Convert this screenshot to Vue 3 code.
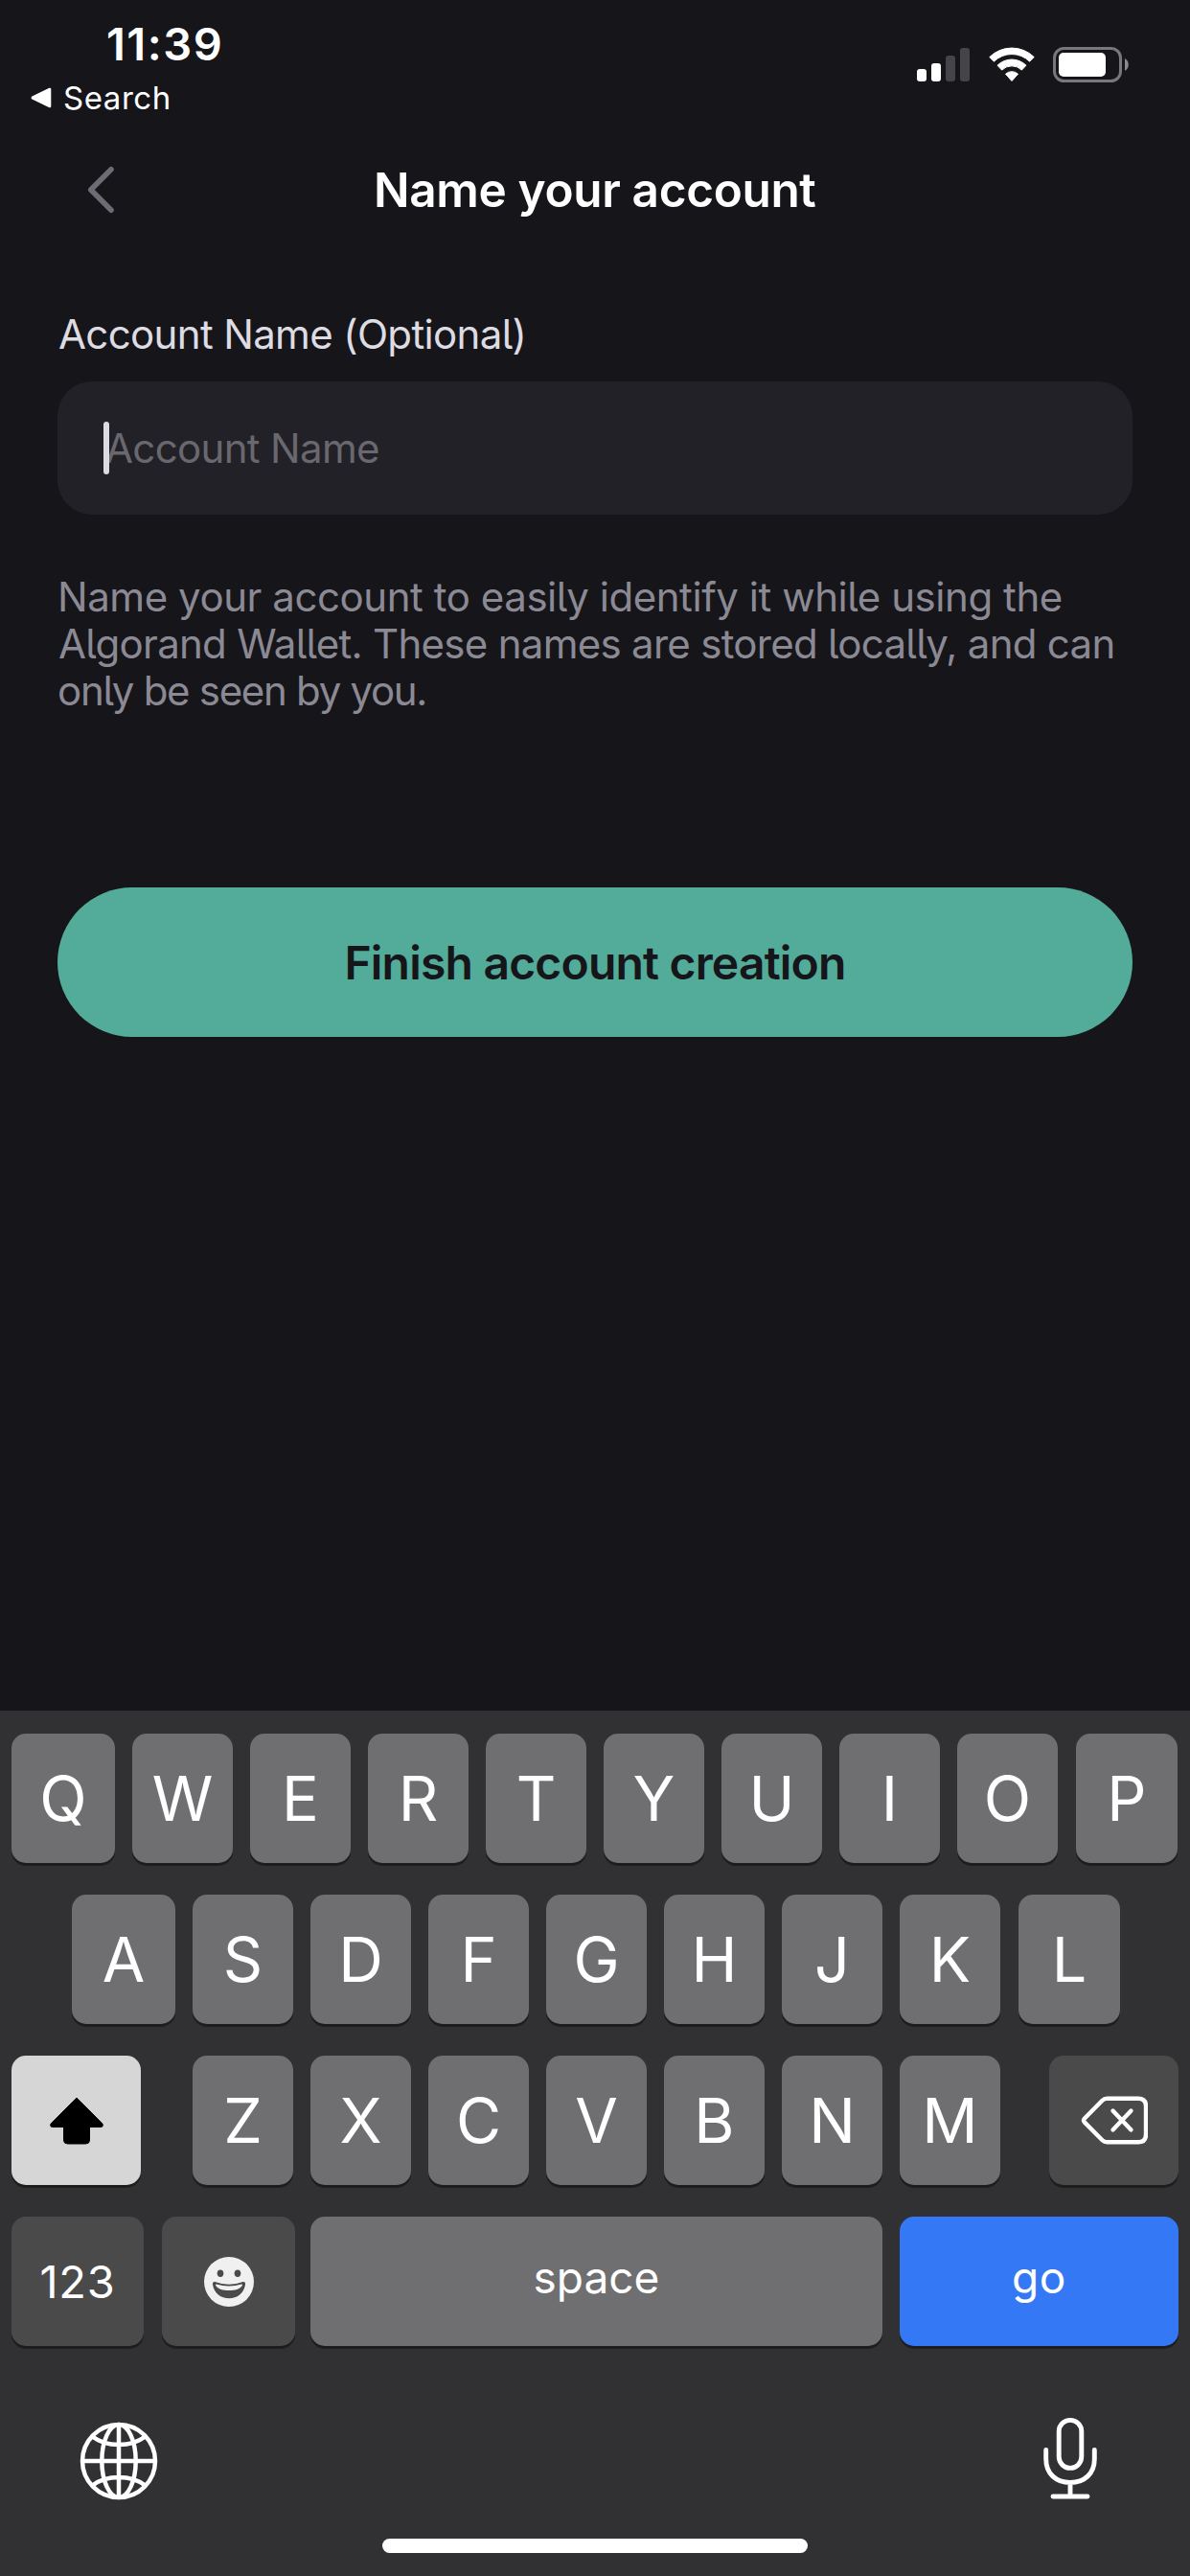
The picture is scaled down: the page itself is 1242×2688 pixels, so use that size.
<script setup>
const topRow = 'QWERTYUIOP'.split('')
const homeRow = 'ASDFGHJKL'.split('')
const bottomRow = 'ZXCVBNM'.split('')
const helpLines = [
  { text: 'Name your account to easily identify it while using the', fit: 'fit-a' },
  { text: 'Algorand Wallet. These names are stored locally, and can', fit: 'fit-b' },
  { text: 'only be seen by you.', fit: 'fit-c' },
]
</script>

<template>
  <div class="screen">
    <header class="status">
      <div class="status-left">
        <div class="clock">11:39</div>
        <div class="back-app">
          <svg width="22" height="22" viewBox="0 0 22 22"><path d="M2 10.6 20 2v18L2 11.4z" fill="#fff" stroke="#fff" stroke-width="2.6" stroke-linejoin="round" /></svg>
          <span>Search</span>
        </div>
      </div>
      <div class="status-icons">
        <svg width="55" height="37" viewBox="0 0 55 37">
          <rect x="0" y="23" width="10" height="13" rx="3" fill="#fff" />
          <rect x="15" y="17" width="10" height="19" rx="3" fill="#fff" />
          <rect x="30" y="9" width="10" height="27" rx="3" fill="#454449" />
          <rect x="45" y="1" width="10" height="35" rx="3" fill="#454449" />
        </svg>
        <svg width="48" height="37" viewBox="0 0 48 37" fill="#fff" stroke="#fff" stroke-width="1" stroke-linejoin="round">
          <path d="M.8 10.6a33 33 0 0 1 46.4 0l-4.6 4.6a26.4 26.4 0 0 0-37.2 0z" />
          <path d="M9 19.2a21.4 21.4 0 0 1 30 0l-4.6 4.9a14.8 14.8 0 0 0-20.8 0z" />
          <path d="M17.5 28.2a9.6 9.6 0 0 1 13 0L24 35.5z" />
        </svg>
        <svg width="80" height="37" viewBox="0 0 80 37">
          <rect x="1.5" y="1.5" width="69" height="34" rx="10" fill="none" stroke="#78777a" stroke-width="3" />
          <rect x="6" y="6" width="49" height="25" rx="5" fill="#fff" />
          <path d="M75 12c5 2.400 5 10.600 0 13z" fill="#8a898c" />
        </svg>
      </div>
    </header>

    <nav class="title-bar">
      <svg class="chevron" width="28" height="50" viewBox="0 0 28 50"><path d="M25 3.700 3.800 25 25 46.300" fill="none" stroke="#6d6c75" stroke-width="5.600" stroke-linecap="round" stroke-linejoin="round" /></svg>
      <h1>Name your account</h1>
    </nav>

    <main class="form">
      <label class="label">Account Name (Optional)</label>
      <div class="field">
        <i class="caret"></i>
        <span>Account Name</span>
      </div>
      <p class="help">
        <span v-for="l in helpLines" :key="l.fit" :class="l.fit">{{ l.text }}</span>
      </p>
      <button class="finish">Finish account creation</button>
    </main>

    <section class="keyboard">
      <div class="row row-top">
        <div v-for="k in topRow" :key="k" class="key" :class="'key-' + k"><span>{{ k }}</span></div>
      </div>
      <div class="row row-home">
        <div v-for="k in homeRow" :key="k" class="key" :class="'key-' + k"><span>{{ k }}</span></div>
      </div>
      <div class="row row-bottom">
        <div class="key shift">
          <svg width="58" height="51" viewBox="0 0 58 51"><path d="M29 2 55.500 28.600c1.600 1.800.9 3.900-1.300 3.900H42.500V46q0 4-4 4h-19q-4 0-4-4V32.500H3.800c-2.200 0-2.900-2.100-1.300-3.900z" fill="#000" stroke="#000" stroke-width="1" stroke-linejoin="round" /></svg>
        </div>
        <div class="letters">
          <div v-for="k in bottomRow" :key="k" class="key" :class="'key-' + k"><span>{{ k }}</span></div>
        </div>
        <div class="key dark delete">
          <svg width="70" height="51" viewBox="0 0 70 51" fill="none" stroke="#fff" stroke-width="4.400" stroke-linecap="round" stroke-linejoin="round">
            <path d="M27.500 2.700H60q8 0 8 8v29.600q0 8-8 8H27.500q-3 0-5-2L4 27.600q-2-2.100 0-4.200L22.500 4.700q2-2 5-2z" />
            <path d="m33.500 15.500 19 20m0-20-19 20" />
          </svg>
        </div>
      </div>
      <div class="row row-space">
        <div class="key dark numbers"><span>123</span></div>
        <div class="key dark emoji">
          <svg width="52" height="52" viewBox="0 0 52 52">
            <circle cx="26" cy="26" r="26" fill="#f0f0f0" />
            <ellipse cx="17" cy="17.300" rx="3.300" ry="3.700" fill="#4a4a4a" />
            <ellipse cx="35" cy="17.300" rx="3.300" ry="3.700" fill="#4a4a4a" />
            <path d="M11.300 26Q26 31.500 40.700 26q2.800-.3 2.300 3C41.500 38 34.500 43.300 26 43.300S10.500 38 9 29q-.5-3.300 2.300-3z" fill="#4a4a4a" />
            <path d="M12.800 28.400q13.200 4.200 26.400 0 1.200 0 .7 1.400C37.500 34 32 35 26 35s-11.500-1-13.900-5.200q-.5-1.400.7-1.400z" fill="#f0f0f0" />
          </svg>
        </div>
        <div class="key space"><span>space</span></div>
        <div class="key go"><span>go</span></div>
      </div>

      <div class="dock">
        <svg class="globe" width="82" height="82" viewBox="0 0 82 82" fill="none" stroke="#fff" stroke-width="4.500">
          <circle cx="41" cy="41" r="38" />
          <ellipse cx="41" cy="41" rx="17.700" ry="38" />
          <path d="M41 3v76M3 41h76M13.500 15.500q11 8.500 27.500 8.500t27.500-8.500M13.500 66.500Q24.500 58 41 58t27.500 8.500" />
        </svg>
        <svg width="58" height="86" viewBox="0 0 58 86" fill="none" stroke="#fff" stroke-width="4.900" stroke-linecap="round">
          <rect x="17.200" y="3.400" width="23.600" height="50" rx="11.800" />
          <path d="M3.700 34.500V44C3.700 59 14 68.500 29 68.500S54.300 59 54.300 44v-9.500M29 69v14M11 83h36" />
        </svg>
      </div>
      <div class="home-bar"></div>
    </section>
  </div>
</template>

<style>
body { background: #16151a; }
</style>

<style scoped>
.screen {
  display: flex;
  flex-direction: column;
  width: 1242px;
  height: 2688px;
  background: #16151a;
  color: #fff;
  font-family: Inter, "Liberation Sans", sans-serif;
  overflow: hidden;
}
.status {
  display: flex;
  justify-content: space-between;
  height: 138px;
  flex: none;
}
.status-left { padding: 16px 0 0 32px; }
.clock {
  margin-left: 79px;
  font-size: 47px;
  line-height: 60px;
  font-weight: 600;
  letter-spacing: 1.5px;
}
.back-app {
  display: flex;
  align-items: center;
  gap: 12px;
  height: 40px;
  margin-top: 6px;
  font-size: 33px;
  letter-spacing: .54px;
}
.status-icons {
  display: flex;
  gap: 19.5px;
  padding: 49px 63px 0 0;
}
.title-bar {
  display: flex;
  align-items: center;
  height: 120px;
  flex: none;
  padding-left: 91px;
}
.chevron { flex: none; }
h1 {
  margin: 0 0 0 271px;
  font-size: 49.5px;
  font-weight: 600;
  letter-spacing: -.35px;
  white-space: nowrap;
}
.form {
  display: flex;
  flex-direction: column;
  height: 1527px;
  flex: none;
  padding: 66px 60px 0;
  box-sizing: border-box;
  font-size: 42px;
  font-feature-settings: "cv05";
}
.label {
  height: 50px;
  line-height: 50px;
  padding-left: 1px;
  color: #dddce2;
  letter-spacing: -.65px;
}
.field {
  position: relative;
  display: flex;
  align-items: center;
  height: 139px;
  margin-top: 24px;
  padding-left: 50px;
  border-radius: 36px;
  background: #222127;
  color: #69686e;
  letter-spacing: -.67px;
}
.caret {
  position: absolute;
  left: 48px;
  top: 42px;
  width: 6px;
  height: 55px;
  border-radius: 3px;
  background: #dcdbe2;
}
.help {
  display: flex;
  flex-direction: column;
  margin: 61px 0 0;
  line-height: 49px;
  color: #8b8a94;
  white-space: nowrap;
}
.fit-a { letter-spacing: -.44px; }
.fit-b { letter-spacing: -.71px; padding-left: 1px; }
.fit-c { letter-spacing: -1.3px; }
.finish {
  height: 156px;
  margin: 181px 0 0;
  padding: 1px 0 0;
  border: 0;
  border-radius: 78px;
  background: #53ab99;
  color: #16151a;
  font: 600 48px/155px Inter, "Liberation Sans", sans-serif;
  letter-spacing: -.8px;
}
.keyboard {
  display: flex;
  flex-direction: column;
  flex: 1;
  padding: 24px 12px 0;
  background: #313133;
}
.row {
  display: flex;
  height: 135px;
  gap: 18px;
  margin-bottom: 33px;
  flex: none;
}
.key {
  display: flex;
  align-items: center;
  justify-content: center;
  width: 105px;
  height: 135px;
  flex: none;
  border-radius: 15px;
  background: #6f6f71;
  box-shadow: 0 3px 0 #1d1d1e;
  font-size: 64.6px;
}
.key-Q, .key-A { width: 108px; }
.key-P, .key-L { width: 106px; margin-left: 1px; }
.row-home { padding-left: 63px; }
.row-bottom, .row-space { gap: 0; }
.letters { display: flex; gap: 18px; margin: 0 51px 0 54px; }
.shift { width: 135px; background: #d6d6d6; }
.dark { background: #4a4a4a; }
.delete { width: 135px; }
.delete svg { margin-left: 1px; }
.numbers { width: 138px; font-size: 47px; letter-spacing: .8px; }
.emoji { width: 139px; margin: 0 16px 0 19px; }
.space { width: 597px; margin-right: 18px; font-size: 46px; }
.go { width: 291px; background: #3478f6; font-size: 46px; letter-spacing: .6px; }
.space span, .go span { position: relative; top: -5px; }
.dock {
  display: flex;
  align-items: center;
  justify-content: space-between;
  height: 86px;
  margin-top: 41px;
  padding: 0 84px 0 71px;
}
.globe { margin-top: 6px; }
.home-bar {
  width: 444px;
  height: 15px;
  margin: 41px auto 0;
  border-radius: 8px;
  background: #fff;
}
</style>
